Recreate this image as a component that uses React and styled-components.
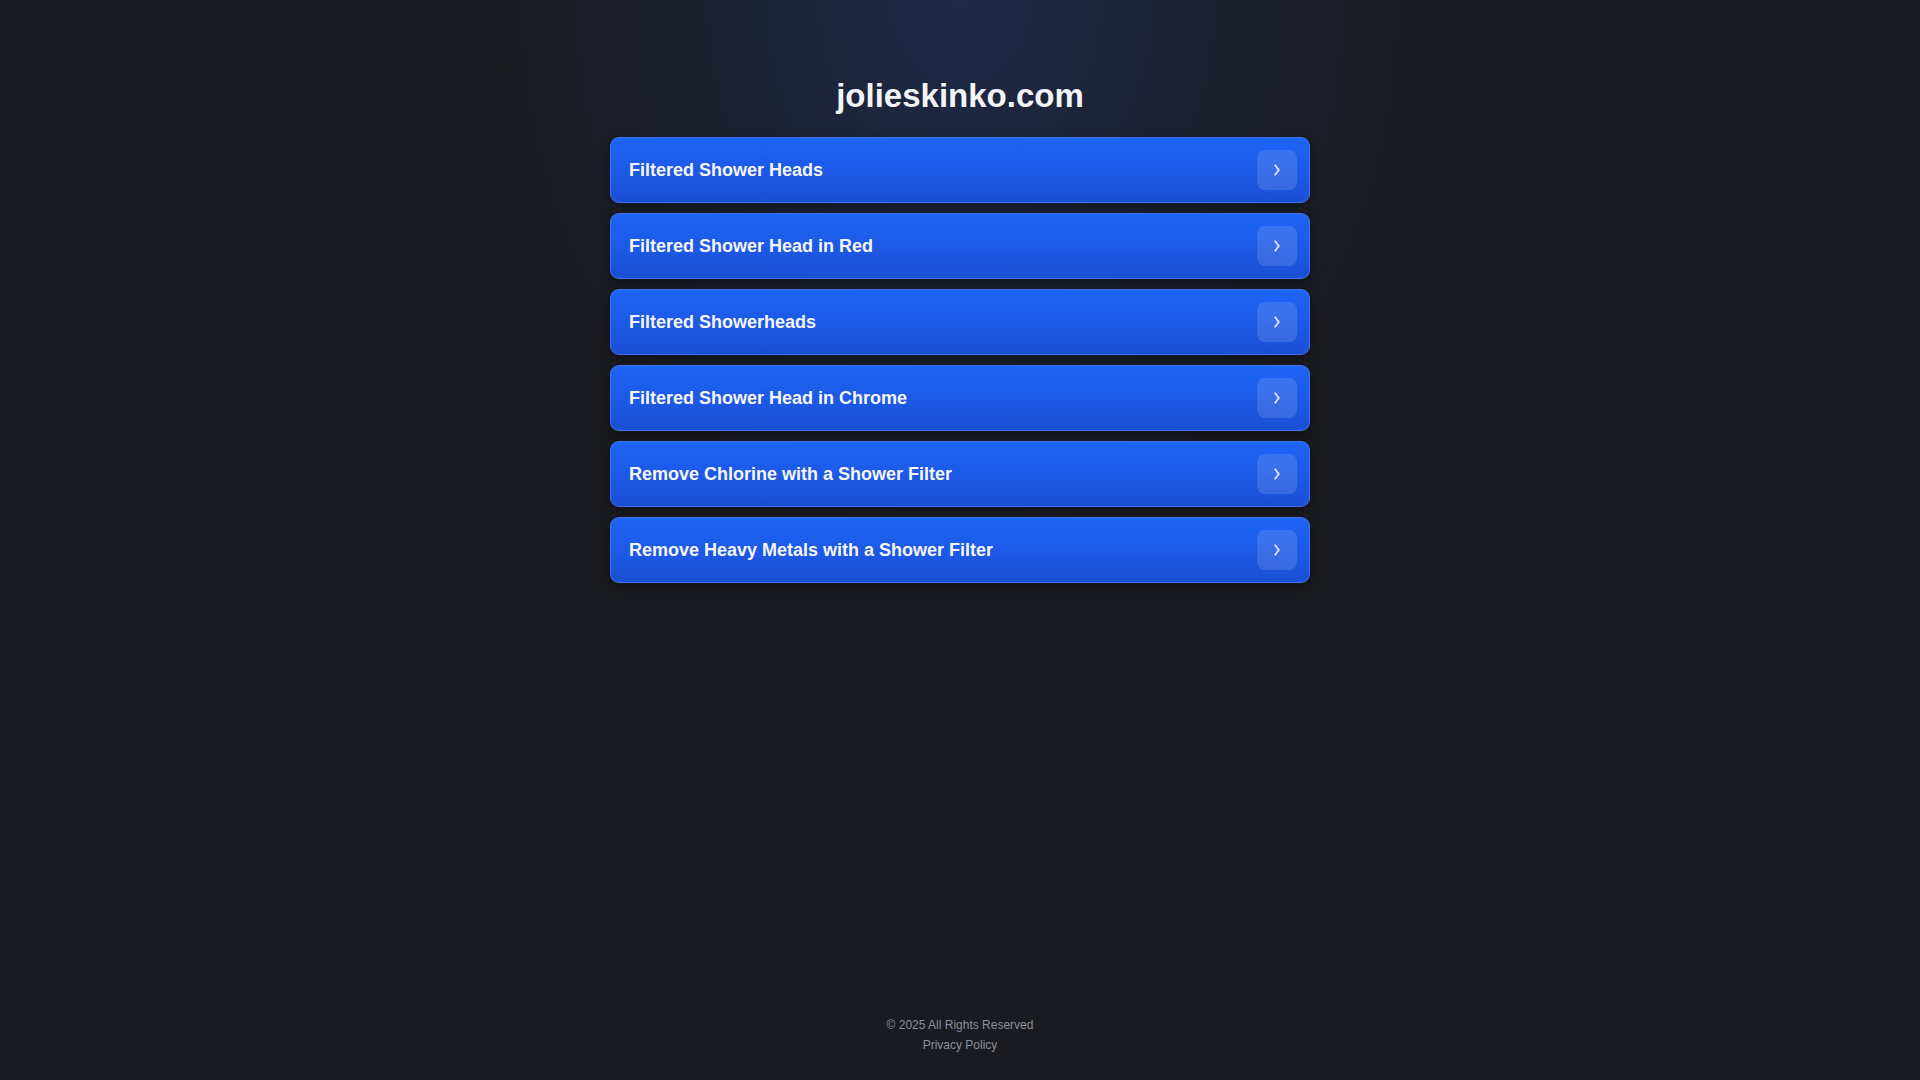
import styled, { createGlobalStyle } from 'styled-components';

const GlobalStyle = createGlobalStyle`
  * { box-sizing: border-box; }
  html, body { margin: 0; padding: 0; }
  body {
    background-color: #1a1b20;
    font-family: 'Liberation Sans', Arial, sans-serif;
    color: #ffffff;
  }
`;

const links = [
  'Filtered Shower Heads',
  'Filtered Shower Head in Red',
  'Filtered Showerheads',
  'Filtered Shower Head in Chrome',
  'Remove Chlorine with a Shower Filter',
  'Remove Heavy Metals with a Shower Filter',
];

function Chevron() {
  return (
    <svg width="6" height="12" viewBox="0 0 6 12" fill="none">
      <path d="M1.2 1.2 L4.8 6 L1.2 10.8" stroke="currentColor" strokeWidth="1.8" strokeLinecap="round" strokeLinejoin="round" />
    </svg>
  );
}

export default function App() {
  return (
    <>
      <GlobalStyle />
      <Page>
        <Main>
          <Title>jolieskinko.com</Title>
          <List>
            {links.map((label) => (
              <Card key={label} href="#">
                <Label>{label}</Label>
                <Arrow><Chevron /></Arrow>
              </Card>
            ))}
          </List>
        </Main>
        <Footer>
          <FooterText>© 2025 All Rights Reserved</FooterText>
          <FooterLink href="#">Privacy Policy</FooterLink>
        </Footer>
      </Page>
    </>
  );
}

const Page = styled.div`
  min-height: 100vh;
  display: flex;
  flex-direction: column;
  align-items: center;
  background: radial-gradient(ellipse 460px 560px at 50% 0%, rgba(35, 55, 110, 0.5) 0%, rgba(26, 27, 32, 0) 100%), #1a1b20;
`;

const Main = styled.main`
  width: 700px;
  flex: 1;
  display: flex;
  flex-direction: column;
  align-items: stretch;
  padding-top: 75px;
`;

const Title = styled.h1`
  margin: 0 0 20px;
  text-align: center;
  font-size: 33px;
  line-height: 42px;
  font-weight: 700;
  color: #f2f4f8;
`;

const List = styled.div`
  display: flex;
  flex-direction: column;
  gap: 10px;
`;

const Card = styled.a`
  display: flex;
  align-items: center;
  justify-content: space-between;
  height: 66px;
  padding: 0 12px 0 18px;
  border-radius: 9px;
  border: 1px solid #3b76f0;
  background: linear-gradient(180deg, #1f64f7 0%, #1a4fd4 100%);
  box-shadow: 0 4px 12px rgba(0, 0, 0, 0.35);
  text-decoration: none;
  color: #ffffff;
`;

const Label = styled.span`
  font-size: 18px;
  font-weight: 700;
  color: #f4f6fb;
`;

const Arrow = styled.span`
  width: 40px;
  height: 40px;
  border-radius: 8px;
  background: rgba(255, 255, 255, 0.13);
  display: flex;
  align-items: center;
  justify-content: center;
  color: #e2e9ff;
`;

const Footer = styled.footer`
  display: flex;
  flex-direction: column;
  align-items: center;
  padding-bottom: 25px;
  font-size: 12px;
  line-height: 20px;
  color: #8c8f98;
`;

const FooterText = styled.span``;

const FooterLink = styled.a`
  color: #8c8f98;
  text-decoration: none;
`;
